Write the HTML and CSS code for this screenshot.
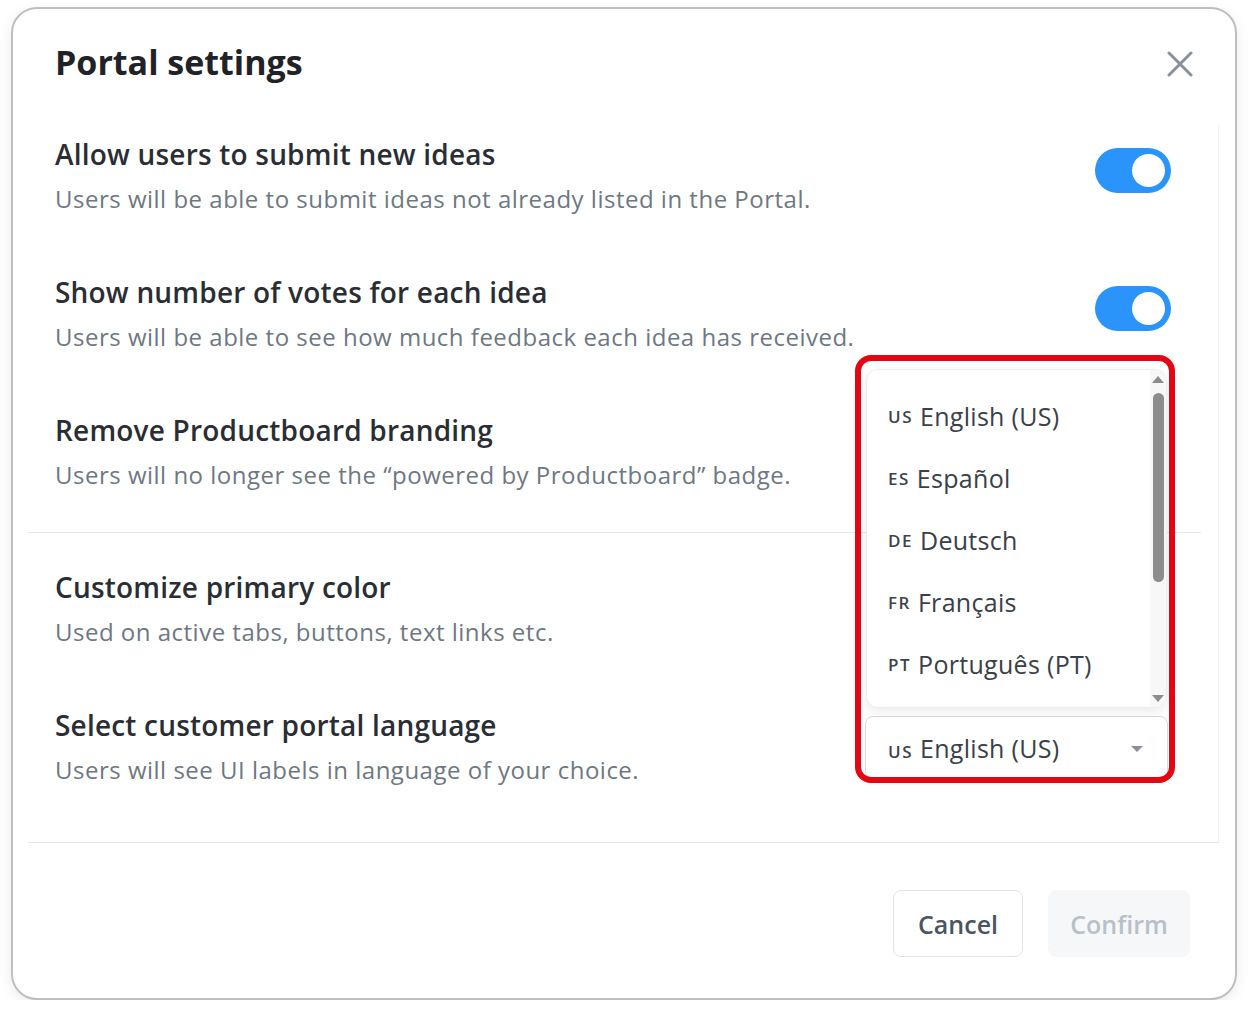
FILE: index.html
```html
<!DOCTYPE html>
<html lang="en">
<head>
<meta charset="utf-8">
<title>Portal settings</title>
<link rel="stylesheet" href="styles.css">
</head>
<body>
<div class="modal">
  <header class="modal-header">
    <h1 class="modal-title">Portal settings</h1>
    <button class="close-btn" aria-label="Close">
      <svg width="26" height="26" viewBox="0 0 26 26"><path d="M2 2 L24 24 M24 2 L2 24" stroke="#8a9098" stroke-width="3" stroke-linecap="round" fill="none"/></svg>
    </button>
  </header>
  <div class="modal-body">
    <div class="group group-top">
      <div class="setting">
        <div class="setting-text">
          <div class="setting-title">Allow users to submit new ideas</div>
          <div class="setting-desc">Users will be able to submit ideas not already listed in the Portal.</div>
        </div>
        <span class="toggle on"><span class="knob"></span></span>
      </div>
      <div class="setting">
        <div class="setting-text">
          <div class="setting-title">Show number of votes for each idea</div>
          <div class="setting-desc">Users will be able to see how much feedback each idea has received.</div>
        </div>
        <span class="toggle on"><span class="knob"></span></span>
      </div>
      <div class="setting">
        <div class="setting-text">
          <div class="setting-title">Remove Productboard branding</div>
          <div class="setting-desc">Users will no longer see the “powered by Productboard” badge.</div>
        </div>
      </div>
    </div>
    <div class="divider short"></div>
    <div class="group group-bottom">
      <div class="setting">
        <div class="setting-text">
          <div class="setting-title">Customize primary color</div>
          <div class="setting-desc">Used on active tabs, buttons, text links etc.</div>
        </div>
      </div>
      <div class="setting">
        <div class="setting-text">
          <div class="setting-title">Select customer portal language</div>
          <div class="setting-desc">Users will see UI labels in language of your choice.</div>
        </div>
        <div class="select-wrap">
          <div class="dropdown">
            <ul class="options">
              <li class="option"><span class="code">US</span>English (US)</li>
              <li class="option"><span class="code">ES</span>Español</li>
              <li class="option"><span class="code">DE</span>Deutsch</li>
              <li class="option"><span class="code">FR</span>Français</li>
              <li class="option"><span class="code">PT</span>Português (PT)</li>
            </ul>
            <div class="scrollbar">
              <span class="arrow up"></span>
              <span class="thumb"></span>
              <span class="arrow down"></span>
            </div>
          </div>
          <div class="select">
            <span class="select-value"><span class="code">US</span>English (US)</span>
            <span class="caret"></span>
          </div>
          <div class="highlight"></div>
        </div>
      </div>
    </div>
  </div>
  <div class="divider full"></div>
  <footer class="modal-footer">
    <button class="btn btn-cancel">Cancel</button>
    <button class="btn btn-confirm">Confirm</button>
  </footer>
</div>
</body>
</html>
```

FILE: styles.css
```css
html, body {
  margin: 0;
  padding: 0;
  background: #ffffff;
}

body {
  font-family: "Open Sans", "Lato", sans-serif;
  color: #23272d;
}

.modal {
  box-sizing: border-box;
  margin: 7px 0 0 11px;
  width: 1226px;
  height: 993px;
  border: 2px solid #bfbfbf;
  border-radius: 26px;
  background: #fff;
  box-shadow: 0 4px 14px rgba(0, 0, 0, 0.08);
  display: flex;
  flex-direction: column;
}

.modal-header {
  height: 116px;
  box-sizing: border-box;
  padding: 33px 42px 0 42px;
  display: flex;
  justify-content: space-between;
  align-items: flex-start;
}

.modal-title {
  margin: 0;
  font-size: 34px;
  line-height: 40px;
  font-weight: 700;
  color: #1f2328;
}

.close-btn {
  border: 0;
  background: none;
  padding: 0;
  margin-top: 9px;
  width: 26px;
  height: 26px;
  cursor: pointer;
}

.close-btn svg {
  display: block;
}

.modal-body {
  margin: 0 16px 0 15px;
  border-right: 1px solid #f3f3f3;
  padding-left: 27px;
}

.group {
  display: flex;
  flex-direction: column;
  gap: 62px;
}

.group-top {
  padding: 12px 0 43px;
}

.group-bottom {
  padding: 37px 0 58px;
}

.setting {
  display: flex;
  justify-content: space-between;
  align-items: flex-start;
  height: 76px;
}

.setting-title {
  font-size: 28px;
  line-height: 34px;
  font-weight: 600;
  letter-spacing: 0.2px;
  color: #2a2e34;
  margin-bottom: 12px;
}

.setting-desc {
  font-size: 24px;
  line-height: 32px;
  letter-spacing: 0.5px;
  color: #6e7782;
}

.toggle {
  display: block;
  width: 76px;
  height: 45px;
  border-radius: 23px;
  background: #2b94fb;
  margin-top: 11px;
  margin-right: 47px;
  position: relative;
}

.knob {
  position: absolute;
  top: 6px;
  right: 6px;
  width: 33px;
  height: 33px;
  border-radius: 50%;
  background: #fff;
}

.divider {
  height: 1px;
  background: #e3e7ec;
}

.divider.short {
  margin-right: 17px;
  margin-left: -27px;
}

.divider.full {
  margin: 0 16px 0 15px;
}

.select-wrap {
  position: relative;
  margin-top: 8px;
  margin-right: 50px;
  width: 303px;
}

.select {
  box-sizing: border-box;
  height: 64px;
  border: 1px solid #d5dae1;
  border-radius: 8px;
  background: #fff;
  display: flex;
  align-items: center;
  justify-content: space-between;
  padding: 0 24px 0 22px;
}

.select-value,
.option {
  font-size: 25px;
  letter-spacing: 0.3px;
  color: #3a4047;
  display: flex;
  align-items: baseline;
}

.code {
  font-size: 17px;
  font-weight: 600;
  letter-spacing: 1.5px;
  color: #3d434b;
  margin-right: 7px;
}

.caret {
  width: 0;
  height: 0;
  border-left: 6px solid transparent;
  border-right: 6px solid transparent;
  border-top: 6px solid #8a9098;
  margin-top: 2px;
}

.dropdown {
  position: absolute;
  left: 1px;
  bottom: calc(100% + 8px);
  width: 301px;
  height: 339px;
  box-sizing: border-box;
  background: #fff;
  border: 1px solid #eceff2;
  border-radius: 12px;
  box-shadow: 0 4px 12px rgba(0, 0, 0, 0.08);
  display: flex;
  overflow: hidden;
}

.options {
  list-style: none;
  margin: 0;
  padding: 15px 0 0 21px;
  flex: 1;
}

.option {
  height: 62px;
  align-items: center;
}

.scrollbar {
  width: 16px;
  background: #f7f7f7;
  display: flex;
  flex-direction: column;
  align-items: center;
  padding-top: 6px;
  box-sizing: border-box;
}

.arrow {
  width: 0;
  height: 0;
  border-left: 6px solid transparent;
  border-right: 6px solid transparent;
}

.arrow.up {
  border-bottom: 7px solid #8c8c8c;
}

.arrow.down {
  border-top: 7px solid #8c8c8c;
  margin-top: auto;
  margin-bottom: 5px;
}

.thumb {
  width: 11px;
  height: 189px;
  margin-top: 10px;
  border-radius: 6px;
  background: #8c8c8c;
}

.highlight {
  position: absolute;
  left: -10px;
  top: -361px;
  width: 320px;
  height: 428px;
  box-sizing: border-box;
  border: 6px solid #e30613;
  border-radius: 16px;
  pointer-events: none;
}

.modal-footer {
  display: flex;
  justify-content: flex-end;
  gap: 25px;
  padding: 47px 45px 0 0;
}

.btn {
  font-family: inherit;
  height: 67px;
  border-radius: 8px;
  font-size: 25px;
  font-weight: 600;
  cursor: pointer;
}

.btn-cancel {
  width: 130px;
  border: 1px solid #e1e5ea;
  background: #fff;
  color: #4b5561;
}

.btn-confirm {
  width: 142px;
  border: 0;
  background: #f6f7f9;
  color: #b8c0c9;
}
```
